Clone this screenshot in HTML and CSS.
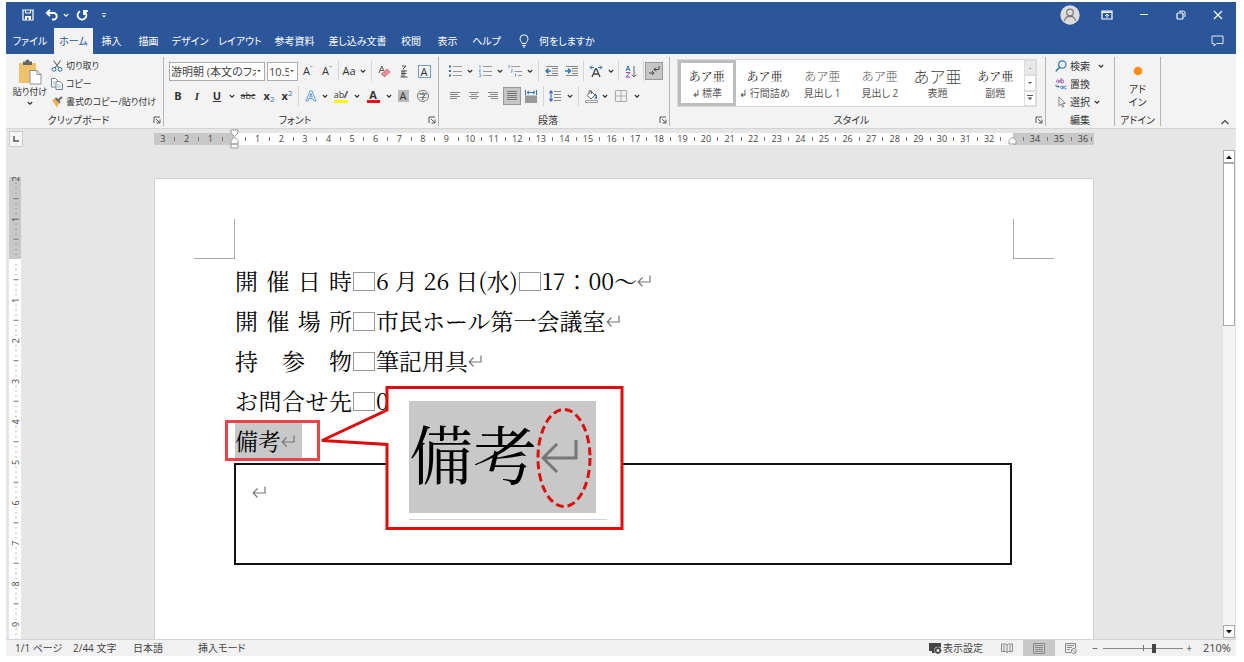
FILE: index.html
```html
<!DOCTYPE html>
<html lang="ja">
<head>
<meta charset="utf-8">
<title>文書</title>
<link rel="stylesheet" href="styles.css">
</head>
<body>
<svg class="defs" aria-hidden="true">
  <symbol id="chev" viewBox="0 0 8 8"><path d="M1.8 3L4 5.2 6.2 3" fill="none" stroke="currentColor" stroke-width="1.1"/></symbol>
  <symbol id="launch" viewBox="0 0 8 8"><path d="M1 7V1h6M3 3l3.500 3.500M7 3.500V7H3.500" fill="none" stroke="#555" stroke-width="1"/></symbol>
  <symbol id="ret" viewBox="0 0 14 12"><path d="M13 0.500V7H1.500M5.500 2.500L1.200 7l4.300 4.500" fill="none" stroke="currentColor" stroke-width="1.200"/></symbol>
</svg>
<div class="app">
  <header class="titlebar">
    <div class="quick">
      <button class="w24" aria-label="上書き保存"><svg width="12" height="12" viewBox="0 0 12 12"><path d="M1 1h10v10H1z" fill="none" stroke="#fff" stroke-width="1.200"/><path d="M3 7h6v4H3z" fill="#fff"/><path d="M3.500 1v3h5V1" fill="none" stroke="#fff"/><path d="M5 8.500h1.500V11H5z" fill="#2b579a"/></svg></button>
      <button class="w22" aria-label="元に戻す"><svg width="13" height="12" viewBox="0 0 13 12"><path d="M2 4h6.500a3 3 0 0 1 0 6.500H7M5 0.800L1.800 4 5 7.200" fill="none" stroke="#fff" stroke-width="1.900"/></svg></button>
      <button class="w8" aria-label="履歴"><svg width="8" height="8"><use href="#chev"/></svg></button>
      <button class="w24" aria-label="繰り返し"><svg width="12" height="12" viewBox="0 0 12 12"><path d="M4 2.200a4.400 4.400 0 1 0 4.300 0.200M8 6V2h3.800" fill="none" stroke="#fff" stroke-width="1.800"/></svg></button>
      <button class="w20" aria-label="カスタマイズ"><svg width="8" height="8" viewBox="0 0 8 8"><path d="M2 2.500h4" stroke="#fff"/><path d="M2 4.500h4L4 6.500z" fill="#fff"/></svg></button>
    </div>
    <div class="window-buttons">
      <button aria-label="アカウント"><svg width="20" height="20" viewBox="0 0 20 20"><circle cx="10" cy="10" r="9.700" fill="#dcdcdc"/><circle cx="10" cy="7.500" r="3.300" fill="none" stroke="#777" stroke-width="1.200"/><path d="M4.500 16c.5-3 2.500-4.700 5.500-4.700s5 1.700 5.500 4.700" fill="none" stroke="#777" stroke-width="1.200"/></svg></button>
      <button aria-label="リボンの表示オプション"><svg width="12" height="10" viewBox="0 0 12 10"><path d="M1 1h10v8H1zM1 2.300h10" fill="none" stroke="#fff" stroke-width="1.200"/><path d="M6 8V4.500M4 6l2-2 2 2" fill="none" stroke="#fff"/></svg></button>
      <button aria-label="最小化"><svg width="10" height="10" viewBox="0 0 10 10"><path d="M1 4.500h8" stroke="#fff"/></svg></button>
      <button aria-label="元のサイズに戻す"><svg width="10" height="10" viewBox="0 0 10 10"><rect x="1" y="3" width="6" height="6" rx="1" fill="none" stroke="#fff" stroke-width="1.200"/><path d="M3 1.200h4.500a1.500 1.500 0 0 1 1.500 1.500V7" fill="none" stroke="#fff"/></svg></button>
      <button aria-label="閉じる"><svg width="10" height="10" viewBox="0 0 10 10"><path d="M1 1l8 8M9 1L1 9" stroke="#fff" stroke-width="1.100"/></svg></button>
    </div>
  </header>

  <nav class="tabs">
    <div class="tab-list">
      <button>ファイル</button><button class="active">ホーム</button><button>挿入</button><button>描画</button><button>デザイン</button><button>レイアウト</button><button>参考資料</button><button>差し込み文書</button><button>校閲</button><button>表示</button><button>ヘルプ</button>
    </div>
    <button class="tell"><svg width="10" height="14" viewBox="0 0 10 14"><path d="M3 9.500C3 8 1 7 1 4.800a4 4 0 0 1 8 0C9 7 7 8 7 9.500zM3.300 11.500h3.400M4 13h2" fill="none" stroke="#fff"/></svg>何をしますか</button>
    <button class="comment" aria-label="コメント"><svg width="13" height="12" viewBox="0 0 13 12"><path d="M1 1h11v7.500H5.500L3 11V8.500H1z" fill="none" stroke="#dfe8f6"/></svg></button>
  </nav>

  <section class="ribbon">
    <div class="group clipboard">
      <div class="tools clip-tools">
        <button class="paste"><svg width="24" height="26" viewBox="0 0 24 26"><path d="M1 4h17v20H1z" fill="#efc36e"/><path d="M5 2.500h2.500a2 2 0 0 1 4 0H14V6H5z" fill="#666"/><path d="M12 11.500h7l4 4V25H12z" fill="#fff" stroke="#8a9099"/><path d="M19 11.500v4h4" fill="none" stroke="#8a9099"/></svg><span>貼り付け</span><svg width="8" height="8"><use href="#chev"/></svg></button>
        <div class="stack">
          <button><svg width="12" height="12" viewBox="0 0 12 12"><path d="M2.500 0.500L8 8M9.500 0.500L4 8" stroke="#666" fill="none" stroke-width="1.100"/><circle cx="3" cy="9.300" r="1.900" fill="none" stroke="#2f75b5"/><circle cx="9" cy="9.300" r="1.900" fill="none" stroke="#2f75b5"/></svg>切り取り</button>
          <button><svg width="12" height="12" viewBox="0 0 12 12"><path d="M.5.5h4l2 2V9h-6z" fill="#fff" stroke="#75808e"/><path d="M5 3.500h4l2.500 2.500v5.500H5z" fill="#fff" stroke="#75808e"/><path d="M6.500 7h3M6.500 9h3M2 4h2M2 6h2" stroke="#8fb0d8"/></svg>コピー</button>
          <button><svg width="12" height="12" viewBox="0 0 12 12"><path d="M1 4l3-1.500 4.500 4.500L6 11.500z" fill="#efb04b"/><path d="M4.500 2l4.500 4.500" stroke="#666" stroke-width="1.800"/><path d="M7.500 4L11 1" stroke="#666" stroke-width="2"/></svg>書式のコピー/貼り付け</button>
        </div>
      </div>
      <div class="caption"><span>クリップボード</span><button aria-label="クリップボードの詳細"><svg width="8" height="8"><use href="#launch"/></svg></button></div>
    </div>

    <div class="group font">
      <div class="tools">
        <div class="row">
          <select class="font-name" aria-label="フォント名"><option>游明朝 (本文のフォント - 日本語)</option></select>
          <select class="font-size" aria-label="フォントサイズ"><option>10.5</option></select>
          <button class="w20" aria-label="拡大">A<sup>ˆ</sup></button><button class="w18" aria-label="縮小">A<sup>ˇ</sup></button><i class="sep w4"></i>
          <button class="w18" aria-label="文字種の変換">Aa</button><button class="w10" aria-label="開く"><svg width="8" height="8"><use href="#chev"/></svg></button><i class="sep w6"></i>
          <button class="w20" aria-label="書式のクリア"><svg width="13" height="13" viewBox="0 0 13 13"><path d="M1 8L3.700 1 6 6M2 5.500h3" fill="none" stroke="#555"/><path d="M3 8.500L9 3.500l4 3.500-6 5z" fill="#e58a96"/><path d="M3 8.500l4 3.500" stroke="#c96675"/></svg></button>
          <button class="w20" aria-label="ルビ"><svg width="10" height="13" viewBox="0 0 10 13"><path d="M3 1h4L4 4M2 6h6M5 4.500V12M2.500 8.500h5M1.500 12h7M3 6v6" fill="none" stroke="#555"/></svg></button>
          <button class="w20" aria-label="囲み線"><span class="boxed">A</span></button>
        </div>
        <div class="row">
          <button class="w18" aria-label="太字"><b>B</b></button><button class="w20 serif" aria-label="斜体"><b><em>I</em></b></button><button class="w20" aria-label="下線"><b><u>U</u></b></button><button class="w10" aria-label="開く"><svg width="8" height="8"><use href="#chev"/></svg></button>
          <button class="w22 small" aria-label="取り消し線"><s>abc</s></button><button class="w20" aria-label="下付き"><b>x</b><sub>2</sub></button><button class="w16" aria-label="上付き"><b>x</b><sup>2</sup></button><i class="sep w6"></i>
          <button class="w20" aria-label="文字の効果"><svg width="12" height="12" viewBox="0 0 12 12"><path d="M1 11L5 1h2l4 10H9L8 8.500H4L3 11zM4.700 6.800h2.600L6 3.200z" fill="#fff" stroke="#5b9bd5"/></svg></button><button class="w8" aria-label="開く"><svg width="8" height="8"><use href="#chev"/></svg></button>
          <button class="w24" aria-label="蛍光ペン"><span class="marker small">ab<svg width="4" height="9" viewBox="0 0 4 9"><path d="M3.500 1L.5 8" stroke="#666" stroke-width="1.800"/></svg></span></button><button class="w8" aria-label="開く"><svg width="8" height="8"><use href="#chev"/></svg></button>
          <button class="w24" aria-label="フォントの色"><span class="fontcolor">A</span></button><button class="w8" aria-label="開く"><svg width="8" height="8"><use href="#chev"/></svg></button>
          <button class="w20" aria-label="文字の網かけ"><span class="shaded">A</span></button><button class="w20" aria-label="囲い文字"><span class="circled">字</span></button>
        </div>
      </div>
      <div class="caption"><span>フォント</span><button aria-label="フォントの詳細"><svg width="8" height="8"><use href="#launch"/></svg></button></div>
    </div>

    <div class="group para">
      <div class="tools">
        <div class="row">
          <button class="w20" aria-label="箇条書き"><svg width="13" height="12" viewBox="0 0 13 12"><path d="M4 1.500h9M4 6.500h9M4 10.500h9" stroke="#999"/><path d="M0 .5h2v2H0zM0 5h2v2H0zM0 9.500h2v2H0z" fill="#2f75b5"/></svg></button><button class="w10" aria-label="開く"><svg width="8" height="8"><use href="#chev"/></svg></button>
          <button class="w20" aria-label="段落番号"><svg width="13" height="12" viewBox="0 0 13 12"><path d="M4 1.500h9M4 6.500h9M4 10.500h9" stroke="#999"/><path d="M1 0v3M0 4.800h1.500L0 7h2M0 9h1.800v2.500H0" fill="none" stroke="#5b9bd5" stroke-width=".8"/></svg></button><button class="w10" aria-label="開く"><svg width="8" height="8"><use href="#chev"/></svg></button>
          <button class="w20" aria-label="アウトライン"><svg width="14" height="12" viewBox="0 0 14 12"><path d="M3 1.500h9M6.500 6.500H14M10 10.500h4" stroke="#999"/><path d="M1 0v3M4 4v3H2.800M7.500 8.500v3" fill="none" stroke="#5b9bd5"/></svg></button><button class="w10" aria-label="開く"><svg width="8" height="8"><use href="#chev"/></svg></button><i class="sep w6"></i>
          <button class="w20" aria-label="インデントを減らす"><svg width="13" height="12" viewBox="0 0 13 12"><path d="M1 1.500h12M7 3.500h6M7 6h6M7 8.500h6M1 10.500h12" stroke="#888"/><path d="M6 6H1M3.500 3.500L1 6l2.500 2.500" fill="none" stroke="#2f75b5" stroke-width="1.400"/></svg></button>
          <button class="w20" aria-label="インデントを増やす"><svg width="13" height="12" viewBox="0 0 13 12"><path d="M1 1.500h12M7 3.500h6M7 6h6M7 8.500h6M1 10.500h12" stroke="#888"/><path d="M0 6h5.500M3 3.500L5.500 6 3 8.500" fill="none" stroke="#2f75b5" stroke-width="1.400"/></svg></button><i class="sep w4"></i>
          <button class="w22" aria-label="拡張書式"><svg width="14" height="13" viewBox="0 0 14 13"><path d="M3 12L6.500 4h1L11 12M4.500 9h5" fill="none" stroke="#444" stroke-width="1.300"/><path d="M5 2.500H1M3 .5l-2 2 2 2M9 2.500h4M11 .5l2 2-2 2" fill="none" stroke="#2f75b5"/></svg></button><button class="w8" aria-label="開く"><svg width="8" height="8"><use href="#chev"/></svg></button><i class="sep w6"></i>
          <button class="w20" aria-label="並べ替え"><svg width="12" height="13" viewBox="0 0 12 13"><path d="M1 6L3 .8 5 6M1.700 4.300h2.600" fill="none" stroke="#2f75b5"/><path d="M1 7.500h4L1 12h4.200" fill="none" stroke="#9a4fb0"/><path d="M9 1v11M6.800 9.500L9 12l2.200-2.500" fill="none" stroke="#666"/></svg></button><i class="sep w4"></i>
          <button class="w18 pressed" aria-label="編集記号の表示"><svg width="12" height="12" viewBox="0 0 12 12"><path d="M11 1v3.500H6M8 2.500l-2 2 2 2M1 8h5M4 6l2 2-2 2" fill="none" stroke="#444"/></svg></button>
        </div>
        <div class="row">
          <button class="w20" aria-label="左揃え"><svg width="10" height="8" viewBox="0 0 10 8"><path d="M0 .5h10M0 2.500h8M0 4.500h10M0 6.500h7" stroke="#888"/></svg></button>
          <button class="w18" aria-label="中央揃え"><svg width="10" height="8" viewBox="0 0 10 8"><path d="M0 .5h10M2 2.500h6M0 4.500h10M2 6.500h6" stroke="#888"/></svg></button>
          <button class="w20" aria-label="右揃え"><svg width="10" height="8" viewBox="0 0 10 8"><path d="M0 .5h10M2 2.500h8M0 4.500h10M3 6.500h7" stroke="#888"/></svg></button>
          <button class="w18 pressed" aria-label="両端揃え"><svg width="10" height="10" viewBox="0 0 10 10"><path d="M0 .5h10M0 2.500h10M0 4.500h10M0 6.500h10M0 8.500h10" stroke="#777"/></svg></button>
          <button class="w20" aria-label="均等割り付け"><svg width="12" height="13" viewBox="0 0 12 13"><path d="M.5 0v5M11.500 0v5M2 2.500h8M4 .8L2 2.500l2 1.700M8 .8l2 1.700-2 1.700" fill="none" stroke="#2f75b5"/><path d="M0 5.500h12V13H0z" fill="#999"/></svg></button><i class="sep w4"></i>
          <button class="w20" aria-label="行間"><svg width="12" height="12" viewBox="0 0 12 12"><path d="M5 1.500h7M5 4.500h7M5 7.500h7M5 10.500h7" stroke="#888"/><path d="M2 1v10M.3 3L2 1l1.700 2M.3 9L2 11l1.700-2" fill="none" stroke="#3f6fbf" stroke-width="1.200"/></svg></button><button class="w10" aria-label="開く"><svg width="8" height="8"><use href="#chev"/></svg></button><i class="sep w6"></i>
          <button class="w20" aria-label="塗りつぶし"><svg width="13" height="13" viewBox="0 0 13 13"><path d="M6 1L2 5.500 6 9l4-4zM4 3.500V1.500a1 1 0 0 1 2.500 0V4" fill="#fff" stroke="#666"/><path d="M10 4c1.500 1 1.500 3 1 5" fill="none" stroke="#2f75b5" stroke-width="1.500"/><path d="M.5 10.500h12v2H.5z" fill="#fff" stroke="#999"/></svg></button><button class="w8" aria-label="開く"><svg width="8" height="8"><use href="#chev"/></svg></button>
          <button class="w24" aria-label="罫線"><svg width="12" height="12" viewBox="0 0 12 12"><path d="M.5.5h11v11H.5zM6 .5v11M.5 6h11" fill="none" stroke="#aaa"/></svg></button><button class="w8" aria-label="開く"><svg width="8" height="8"><use href="#chev"/></svg></button>
        </div>
      </div>
      <div class="caption"><span>段落</span><button aria-label="段落の詳細"><svg width="8" height="8"><use href="#launch"/></svg></button></div>
    </div>

    <div class="group styles">
      <div class="tools">
        <div class="gallery">
          <button class="chosen"><span class="sample">あア亜</span><span>↲ 標準</span></button>
          <button><span class="sample">あア亜</span><span>↲ 行間詰め</span></button>
          <button><span class="sample light">あア亜</span><span>見出し 1</span></button>
          <button><span class="sample light">あア亜</span><span>見出し 2</span></button>
          <button><span class="sample big">あア亜</span><span>表題</span></button>
          <button><span class="sample">あア亜</span><span>副題</span></button>
          <div class="gallery-nav">
            <button class="off" aria-label="前の行"><svg width="6" height="6" viewBox="0 0 6 6"><path d="M1.500 4L3 2.500 4.500 4z" fill="#999"/></svg></button>
            <button aria-label="次の行"><svg width="6" height="6" viewBox="0 0 6 6"><path d="M1 2h4L3 4z" fill="#555"/></svg></button>
            <button aria-label="その他"><svg width="6" height="8" viewBox="0 0 6 8"><path d="M0 1.500h6" stroke="#555"/><path d="M0.500 3.500h5L3 6z" fill="#555"/></svg></button>
          </div>
        </div>
      </div>
      <div class="caption"><span>スタイル</span><button aria-label="スタイルの詳細"><svg width="8" height="8"><use href="#launch"/></svg></button></div>
    </div>

    <div class="group edit">
      <div class="tools stack">
        <button><svg width="12" height="12" viewBox="0 0 12 12"><circle cx="7.300" cy="4.500" r="3.700" fill="none" stroke="#2f75b5" stroke-width="1.200"/><path d="M4.800 7.200L.8 11.200" stroke="#2f75b5" stroke-width="1.600"/></svg>検索<svg class="far" width="8" height="8"><use href="#chev"/></svg></button>
        <button><svg width="12" height="12" viewBox="0 0 12 12"><path d="M4 3.300a1.300 1.300 0 1 0 0 .1M4 2v3M6 0v5M6 3.500a1.300 1.300 0 1 0 2.500 0 1.300 1.300 0 1 0-2.500 0" fill="none" stroke="#9a4fb0" stroke-width=".9"/><path d="M1 6.500v2h3M3 7.300l1.200 1.200L3 9.700M8 9.300a1.200 1.200 0 1 0 0 .1M8 8v3M11.500 8.300a1.400 1.400 0 1 0 0 2.200" fill="none" stroke="#2f75b5" stroke-width=".9"/></svg>置換</button>
        <button><svg width="12" height="12" viewBox="0 0 12 12"><path d="M4 .8v9l2-2 1.500 3.400 1.300-.6L7.300 7.500h2.800z" fill="#fff" stroke="#777" stroke-width=".9"/></svg>選択<svg width="8" height="8"><use href="#chev"/></svg></button>
      </div>
      <div class="caption"><span>編集</span></div>
    </div>

    <div class="group addin">
      <div class="tools"><button class="addin-button"><svg width="12" height="12" viewBox="0 0 12 12"><circle cx="6" cy="6" r="4.300" fill="#ff8c1a"/></svg><span>アド<br>イン</span></button></div>
      <div class="caption"><span>アドイン</span></div>
    </div>
    <button class="collapse" aria-label="リボンを折りたたむ"><svg width="10" height="8" viewBox="0 0 10 8"><path d="M1.500 6L5 2.500 8.500 6" fill="none" stroke="#444" stroke-width="1.100"/></svg></button>
  </section>

  <main class="work">
    <div class="left-rail">
      <button class="tab-kind" aria-label="タブの種類"><svg width="6" height="6" viewBox="0 0 6 6"><path d="M1 0v5h5" fill="none" stroke="#555" stroke-width="1.500"/></svg></button>
      <svg class="vruler" id="vruler" aria-hidden="true"></svg>
    </div>
    <div class="canvas">
      <div class="hruler">
        <div class="hpart before" data-from="3" data-to="1"></div>
        <div class="hpart body" data-from="1" data-to="32"></div>
        <div class="hpart after" data-from="34" data-to="36"></div>
        <svg class="handle start" width="9" height="22" viewBox="0 0 9 22"><path d="M1 1h7v3L4.500 7.500 1 4zM1 15v-3.500L4.500 8 8 11.500V15zM1 15h7v4H1z" fill="#fff" stroke="#999"/></svg>
        <svg class="handle end" width="9" height="22" viewBox="0 0 9 22"><path d="M1 15v-3.500L4.500 8 8 11.500V15z" fill="#fff" stroke="#999"/></svg>
      </div>
      <article class="page">
        <div class="corners"><i></i><i></i></div>
        <div class="text">
          <p><span class="label"><span>開</span><span>催</span><span>日</span><span>時</span></span><i class="space"></i>6 月 26 日(水)<i class="space"></i>17：00～<svg class="ret" width="14" height="12"><use href="#ret"/></svg></p>
          <p><span class="label"><span>開</span><span>催</span><span>場</span><span>所</span></span><i class="space"></i>市民ホール第一会議室<svg class="ret" width="14" height="12"><use href="#ret"/></svg></p>
          <p><span class="label"><span>持</span><span>参</span><span>物</span></span><i class="space"></i>筆記用具<svg class="ret" width="14" height="12"><use href="#ret"/></svg></p>
          <p><span class="label"><span>お</span><span>問</span><span>合</span><span>せ</span><span>先</span></span><i class="space"></i>0</p>
          <p><span class="selected">備考<svg class="ret" width="14" height="12"><use href="#ret"/></svg></span></p>
          <div class="frame"><svg class="ret" width="14" height="12"><use href="#ret"/></svg></div>
        </div>
        <div class="mark"></div>
        <div class="callout">
          <svg width="306" height="148" viewBox="0 0 306 148"><path d="M68 2.500h235v141H68V59.500L3 55.500 68 25z" fill="#fff" stroke="#dc0d0d" stroke-width="3"/><path d="M90 134.500h198" stroke="#ccd3dc"/></svg>
          <div class="enlarged"><span>備考</span><svg width="37" height="34" viewBox="0 0 37 34"><path d="M35 0v18H2M16 4L2 18l14 14" fill="none" stroke="#777" stroke-width="3"/></svg></div>
          <svg class="ring" width="56" height="102" viewBox="0 0 56 102"><ellipse cx="28" cy="51" rx="26" ry="48.500" fill="none" stroke="#dc0d0d" stroke-width="3" stroke-dasharray="8 4"/></svg>
        </div>
      </article>
    </div>
    <div class="scroll">
      <button aria-label="上へ"><svg width="8" height="6" viewBox="0 0 8 6"><path d="M1 5h6L4 1.500z" fill="#111"/></svg></button>
      <div class="thumb"></div>
      <div class="track"></div>
      <button aria-label="下へ"><svg width="8" height="6" viewBox="0 0 8 6"><path d="M1 1h6L4 4.500z" fill="#111"/></svg></button>
    </div>
  </main>

  <footer class="status">
    <span class="pages">1/1 ページ</span><span class="chars">2/44 文字</span><span class="lang">日本語</span><span>挿入モード</span>
    <div class="view">
      <button class="display"><svg width="13" height="12" viewBox="0 0 13 12"><path d="M0 1h12v8H0zM3 9h4v2H3z" fill="#444"/><circle cx="9" cy="8.500" r="3.800" fill="#f1f1f1"/><circle cx="9" cy="8.500" r="2.400" fill="none" stroke="#444" stroke-width="1.500"/><path d="M9 5v7M5.500 8.500h7" stroke="#444"/><circle cx="9" cy="8.500" r="1.200" fill="#f1f1f1"/></svg>表示設定</button>
      <button class="mode" aria-label="閲覧モード"><svg width="12" height="10" viewBox="0 0 12 10"><path d="M.5 1h4l1.500 1 1.500-1h4v7.500h-4L6 9.500l-1.500-1h-4zM6 2v7M2 3h2M2 5h2M2 7h2M8 3h2M8 5h2M8 7h2" fill="none" stroke="#888"/></svg></button>
      <button class="mode on" aria-label="印刷レイアウト"><svg width="12" height="11" viewBox="0 0 12 11"><path d="M.5.5h11v10H.5zM2 2.500h8M2 4.500h8M2 6.500h8M2 8.500h8" fill="none" stroke="#888"/></svg></button>
      <button class="mode" aria-label="Webレイアウト"><svg width="12" height="11" viewBox="0 0 12 11"><path d="M10.500 5V.5H.5v9H6M2 2.500h7M2 4.500h5M2 6.500h3" fill="none" stroke="#888"/><circle cx="8.800" cy="8" r="2.500" fill="#fff" stroke="#888"/><path d="M7 6.500l3.500 3" stroke="#888"/></svg></button>
      <button class="w16" aria-label="縮小">−</button>
      <input type="range" min="0" max="100" value="65" aria-label="ズーム">
      <button class="w12" aria-label="拡大">+</button>
      <span class="percent">210%</span>
    </div>
  </footer>
</div>
<script src="script.js"></script>
</body>
</html>
```
FILE: styles.css
```css
* { box-sizing: border-box; }
body { margin: 0; background: #fff; color: #333; font: 10px/14px "Open Sans", "Noto Sans CJK JP", sans-serif; font-feature-settings: "palt"; }
button { border: 0; padding: 0; margin: 0; background: none; color: inherit; font: inherit; font-feature-settings: inherit; display: flex; align-items: center; justify-content: center; white-space: nowrap; flex: none; }
svg { display: block; flex: none; }
.defs { display: none; }
.app { margin: 2px 8px 6px 6px; height: calc(100vh - 8px); display: flex; flex-direction: column; background: #e6e6e6; overflow: hidden; }
.w4 { width: 4px; } .w6 { width: 6px; } .w8 { width: 8px; } .w10 { width: 10px; } .w12 { width: 12px; } .w16 { width: 16px; } .w18 { width: 18px; } .w20 { width: 20px; } .w22 { width: 22px; } .w24 { width: 24px; }

.titlebar { height: 26px; flex: none; background: #2b579a; color: #fff; display: flex; justify-content: space-between; align-items: center; padding-left: 10px; }
.quick, .window-buttons { display: flex; align-items: center; }
.window-buttons button { width: 37px; height: 24px; }

.tabs { height: 26px; flex: none; background: #2b579a; color: #fff; display: flex; }
.tab-list { display: grid; grid-template-columns: 48px 39px 37px 37px 46px 54px 55px 71px 36px 37px 41px; }
.tab-list .active { background: #f3f3f3; color: #2b579a; }
.tell { gap: 10px; margin-left: 12px; }
.comment { margin-left: auto; width: 38px; }

.ribbon { flex: none; background: #f3f3f3; border-bottom: 1px solid #d4d4d4; display: flex; padding-top: 3px; height: 75px; color: #333; }
.group { display: flex; flex-direction: column; border-right: 1px solid #b5b5b5; margin-bottom: 2px; }
.group > .tools { flex: 1; min-height: 0; }
.clipboard { width: 158px; } .font { width: 275px; } .para { width: 231px; } .styles { width: 376px; } .edit { width: 69px; } .addin { width: 46px; }
.caption { display: flex; align-items: center; height: 12px; flex: none; }
.caption span { flex: 1; text-align: center; }
.caption button { width: 12px; height: 12px; }
.font .tools { padding: 3px 0 0 5px; } .para .tools { padding: 3px 0 0 6px; }
.row { display: flex; align-items: center; height: 22px; margin-bottom: 3px; font-size: 11px; }
.row button { height: 18px; }
.sep { height: 20px; background: linear-gradient(#d5d5d5, #d5d5d5) center / 1px 100% no-repeat; }
select { appearance: none; border: 1px solid #ababab; border-radius: 0; background: #fff url("data:image/svg+xml,%3Csvg xmlns='http://www.w3.org/2000/svg' width='10' height='6'%3E%3Cpath d='M3 2h4L5 4z' fill='%23555'/%3E%3C/svg%3E") right center no-repeat; height: 19px; padding: 0 8px 0 1px; margin: 0; font: 11px/17px "Open Sans", "Noto Sans CJK JP", sans-serif; font-feature-settings: "palt"; color: #444; overflow: hidden; }
.font-name { width: 96px; margin-right: 2px; }
.font-size { width: 31px; }
sup, sub { font-size: 8px; line-height: 8px; color: #2f75b5; }
sup { align-self: flex-start; margin-top: 2px; } sub { align-self: flex-end; margin-bottom: 2px; }
.serif { font-family: "Liberation Serif", serif; }
.small { font-size: 9px; }
.boxed { border: 1px solid #6a9bd1; width: 13px; height: 13px; line-height: 11px; }
.marker { display: flex; border-bottom: 3px solid #ff0; line-height: 10px; }
.fontcolor { border-bottom: 3px solid #e81010; width: 13px; line-height: 11px; font-weight: bold; }
.shaded { background: #bbb; width: 11px; line-height: 12px; }
.circled { border: 1px solid #777; border-radius: 50%; width: 12px; height: 12px; font-size: 8px; line-height: 10px; }
.pressed { background: #c6c6c6; border: 1px solid #999; }

.clip-tools { display: flex; padding-left: 6px; font-size: 9px; }
.paste { width: 36px; flex-direction: column; justify-content: flex-start; padding-top: 2px; }
.paste span { line-height: 14px; }
.stack { display: flex; flex-direction: column; align-items: flex-start; }
.stack button { height: 18px; gap: 3px; }
.clip-tools .stack { padding-left: 3px; }
.edit .stack { padding-left: 9px; }
.far { margin-left: 4px; }

.styles .tools { padding: 2px 0 0 7px; }
.gallery { display: grid; grid-template-columns: repeat(6, 1fr) 12px; width: 360px; height: 48px; background: #fff; border: 1px solid #dadada; }
.gallery > button { flex-direction: column; color: #555; }
.gallery .chosen { border: 3px solid #bdbdbd; }
.sample { font: 12px/20px "Noto Serif CJK JP", "Noto Sans CJK JP", serif; color: #222; height: 20px; }
.sample.light { font-family: "Noto Sans CJK JP", sans-serif; font-weight: 300; color: #555; }
.sample.big { font-family: "Noto Sans CJK JP", sans-serif; font-weight: 300; font-size: 16px; color: #444; }
.gallery-nav { display: grid; grid-template-rows: repeat(3, 1fr); }
.gallery-nav button { border: 1px solid #ddd; }
.gallery-nav .off { background: #e8e8e8; }
.addin-button { width: 100%; flex-direction: column; padding-top: 8px; gap: 6px; line-height: 13px; }
.collapse { margin-left: auto; align-self: flex-end; width: 22px; height: 12px; }

.work { flex: 1; min-height: 0; display: grid; grid-template-columns: 16px 1fr 14px; }
.left-rail { display: flex; flex-direction: column; padding-left: 3px; }
.tab-kind { width: 14px; height: 16px; margin-top: 2px; background: #f5f5f5; border: 1px solid #ccc; }
.vruler { width: 12px; flex: 1; min-height: 0; margin-top: 30px; overflow: hidden; font-size: 9px; }
.canvas { min-width: 0; display: flex; flex-direction: column; align-items: center; padding-left: 4px; overflow: hidden; }
.hruler { position: relative; width: 100%; max-width: 940px; height: 12px; margin-top: 4px; display: flex; flex: none; font-size: 9px; line-height: 12px; color: #444; }
.hpart { display: flex; background: #c8c8c8; overflow: hidden; }
.hpart span { flex: 1 1 0; min-width: 0; display: flex; justify-content: center; align-items: center; }
.hpart .tick::before { content: ""; width: 1px; height: 4px; background: #777; }
.before { width: 80px; padding: 0 6px 0 3px; }
.body { flex: 1; background: #fff; padding: 0 6px; }
.after { width: 81px; padding-left: 4px; }
.after span:last-child { flex: 0 0 5px; }
.handle { position: absolute; top: -4px; }
.handle.start { left: 76px; } .handle.end { right: 77px; }

.page { position: relative; flex: 1; width: 100%; max-width: 940px; margin-top: 33px; background: #fff; border: 1px solid #d0d0d0; border-bottom: 0; color: #000; }
.corners { display: flex; justify-content: space-between; padding: 40px 39px 0; }
.corners i { width: 41px; height: 40px; border-bottom: 1px solid #aaa; border-right: 1px solid #aaa; }
.corners i + i { border-right: 0; border-left: 1px solid #aaa; }
.text { padding: 2px 81px 0 80px; font: 23px/40px "Noto Serif CJK JP", "Noto Sans CJK JP", serif; font-feature-settings: normal; }
.text p { margin: 0; height: 40px; display: flex; align-items: center; white-space: pre; }
.label { width: 117px; display: flex; justify-content: space-between; }
.space { width: 22px; height: 19px; margin: 0 1px; border: 1px solid #999; }
.ret { color: #777; }
.selected { display: flex; align-items: center; height: 36px; width: 67px; background: #c8c8c8; }
.frame { margin: 2px 0 0 -1px; height: 102px; border: 2px solid #111; padding: 21px 16px; }
.mark { position: absolute; left: 70px; top: 241px; width: 95px; height: 41px; border: 3px solid #e84548; }
.callout { position: absolute; left: 164px; top: 206px; }
.enlarged { position: absolute; left: 90px; top: 16px; width: 187px; height: 112px; background: #c8c8c8; display: flex; align-items: center; font: 64px/100px "Noto Serif CJK JP", "Noto Sans CJK JP", serif; white-space: nowrap; font-feature-settings: normal; }
.enlarged span { height: 112px; }
.enlarged svg { margin-left: 4px; }
.ring { position: absolute; left: 217px; top: 22px; }

.scroll { display: flex; flex-direction: column; padding: 21px 1px 1px 1px; }
.scroll button { height: 13px; background: #fff; border: 1px solid #aaa; }
.thumb { flex: 35; background: #fff; border: 1px solid #aaa; }
.track { flex: 65; background: #f3f3f3; }

.status { height: 17px; flex: none; background: #f1f1f1; border-top: 1px solid #d4d4d4; display: flex; align-items: center; padding-left: 9px; color: #444; white-space: nowrap; }
.pages { width: 58px; } .chars { width: 60px; } .lang { width: 65px; }
.view { margin-left: auto; display: flex; align-items: center; align-self: stretch; }
.view button { align-self: stretch; }
.display { width: 62px; justify-content: flex-start; gap: 1px; }
.mode { width: 32px; }
.on { background: #c8c8c8; }
input[type="range"] { appearance: none; width: 80px; height: 14px; margin: 0; background: linear-gradient(#777, #777) center / 1px 6px no-repeat, linear-gradient(#888, #888) center / 100% 1px no-repeat; }
input[type="range"]::-webkit-slider-thumb { appearance: none; width: 4px; height: 9px; background: #444; }
.percent { width: 41px; padding-left: 8px; font-size: 11px; }
```
FILE: script.js
```js
document.querySelectorAll('.hpart').forEach(function (part) {
  var from = Number(part.dataset.from), to = Number(part.dataset.to);
  var rising = to > from;
  function add(text) {
    var s = document.createElement('span');
    if (text) s.textContent = text; else s.className = 'tick';
    part.appendChild(s);
  }
  if (rising) add('');
  for (var n = from; rising ? n <= to : n >= to; n += rising ? 1 : -1) {
    add(String(n));
    add('');
  }
});

var ruler = document.getElementById('vruler');
var unit = 40.5, zero = 82;
var out = '<rect width="12" height="82" fill="#c8c8c8"/><rect y="82" width="12" height="1200" fill="#fff"/>';
for (var i = -16; i < 76; i++) {
  var y = zero + i * unit / 8;
  if (i % 8 === 0) {
    if (i !== 0) out += '<text text-anchor="middle" fill="#444" transform="translate(10 ' + (y + 1) + ') rotate(-90)">' + Math.abs(i / 8) + '</text>';
  } else {
    var w = i % 4 === 0 ? 5 : 1;
    out += '<rect x="' + (7 - w / 2) + '" y="' + y + '" width="' + w + '" height="1" fill="#777"/>';
  }
}
ruler.innerHTML = out;
```
